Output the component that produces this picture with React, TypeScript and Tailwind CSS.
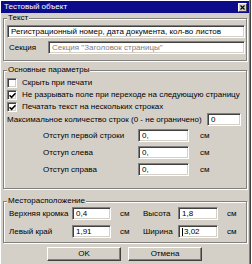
import type { ReactNode } from "react";

const sunken =
  "bg-white border border-t-[#808080] border-l-[#808080] border-b-white border-r-white shadow-[inset_1px_1px_0_#404040,inset_-1px_-1px_0_#d4d0c8]";

function Group({ label, className, children }: { label: string; className: string; children: ReactNode }) {
  return (
    <div className={`relative mx-[3px] border border-[#808080] shadow-[inset_1px_1px_0_#fff,1px_1px_0_#fff] ${className}`}>
      <span className="absolute -top-[5px] left-[3px] bg-[#d4d0c8] px-[1px]">{label}</span>
      {children}
    </div>
  );
}

function Input({ value, className, grey, caret }: { value: string; className: string; grey?: boolean; caret?: boolean }) {
  return (
    <div className={`${sunken} h-[13px] flex items-center pl-[3px] shrink-0 ${grey ? "text-[#808080]" : ""} ${className}`}>
      {caret && <span className="w-px h-[8px] bg-black mr-px" />}
      {value}
    </div>
  );
}

function Check({ checked, label }: { checked?: boolean; label: string }) {
  return (
    <div className="h-[12px] flex items-center ml-[3px] gap-[5px]">
      <div className={`${sunken} w-[10px] h-[10px] flex items-center justify-center`}>
        {checked && (
          <svg width="7" height="7" viewBox="0 0 7 7">
            <path d="M0.5 3.2 L2.6 5.3 L6.5 1.2" fill="none" stroke="black" strokeWidth="1.6" />
          </svg>
        )}
      </div>
      <span>{label}</span>
    </div>
  );
}

function Indent({ label, className }: { label: string; className: string }) {
  return (
    <div className={`flex items-center h-[13px] ${className}`}>
      <span className="ml-[39px] w-[95px]">{label}</span>
      <Input value="0," className="w-[51px]" />
      <span className="ml-[11px]">см</span>
    </div>
  );
}

function Button({ label, className }: { label: string; className: string }) {
  return (
    <div
      className={`h-[14px] w-[74px] flex items-center justify-center border border-t-white border-l-white border-b-[#404040] border-r-[#404040] shadow-[inset_-1px_-1px_0_#808080] ${className}`}
    >
      {label}
    </div>
  );
}

export default function App() {
  return (
    <div className="w-[252px] h-[264px] bg-white">
      <div className="w-[251px] h-[264px] bg-[#d4d0c8] border-r border-[#404040] shadow-[inset_-1px_0_0_#808080,inset_1px_1px_0_#fff] text-[8px] leading-none text-black font-['Liberation_Sans',Arial,sans-serif] flex flex-col">
        <div className="mt-px mx-px h-[12px] bg-[#0c0c8a] flex items-center justify-between pl-[3px] pr-[2px] text-white">
          <span>Тестовый объект</span>
          <div className="w-[9px] h-[9px] bg-[#d4d0c8] border border-t-white border-l-white border-b-[#404040] border-r-[#404040] flex items-center justify-center">
            <svg width="5" height="5" viewBox="0 0 5 5">
              <path d="M0.5 0.5 L4.5 4.5 M4.5 0.5 L0.5 4.5" stroke="black" strokeWidth="1.2" />
            </svg>
          </div>
        </div>

        <Group label="Текст" className="mt-[5px] h-[43px] pt-[6px]">
          <Input value="Регистрационный номер, дата документа, кол-во листов" className="ml-[3px] w-[238px]" />
          <div className="mt-[3px] flex items-center">
            <span className="ml-[5px] w-[39px]">Секция</span>
            <Input value="Секция &quot;Заголовок страницы&quot;" grey className="w-[197px]" />
          </div>
        </Group>

        <Group label="Основные параметры" className="mt-[9px] h-[119px] pt-[6px]">
          <Check label="Скрыть при печати" />
          <Check checked label="Не разрывать поле при переходе на следующую страницу" />
          <Check checked label="Печатать текст на нескольких строках" />
          <div className="h-[13px] flex items-center">
            <span className="ml-[3px] w-[200px]">Максимальное количество строк (0 - не ограничено)</span>
            <Input value="0" className="w-[34px]" />
          </div>
          <Indent label="Отступ первой строки" className="mt-[3px]" />
          <Indent label="Отступ слева" className="mt-[4px]" />
          <Indent label="Отступ справа" className="mt-[4px]" />
        </Group>

        <Group label="Месторасположение" className="mt-[12px] h-[42px] pt-[5px]">
          <div className="flex items-center h-[13px]">
            <span className="ml-[5px] w-[63px]">Верхняя кромка</span>
            <Input value="0,4" className="w-[39px]" />
            <span className="ml-[9px] w-[23px]">см</span>
            <span className="w-[35px]">Высота</span>
            <Input value="1,8" className="w-[40px]" />
            <span className="ml-[9px]">см</span>
          </div>
          <div className="flex items-center h-[13px] mt-[5px]">
            <span className="ml-[5px] w-[63px]">Левый край</span>
            <Input value="1,91" className="w-[39px]" />
            <span className="ml-[9px] w-[23px]">см</span>
            <span className="w-[35px]">Ширина</span>
            <Input value="3,02" caret className="w-[40px]" />
            <span className="ml-[9px]">см</span>
          </div>
        </Group>

        <div className="mt-[4px] flex">
          <Button label="OK" className="ml-[47px]" />
          <Button label="Отмена" className="ml-[7px]" />
        </div>
      </div>
    </div>
  );
}
